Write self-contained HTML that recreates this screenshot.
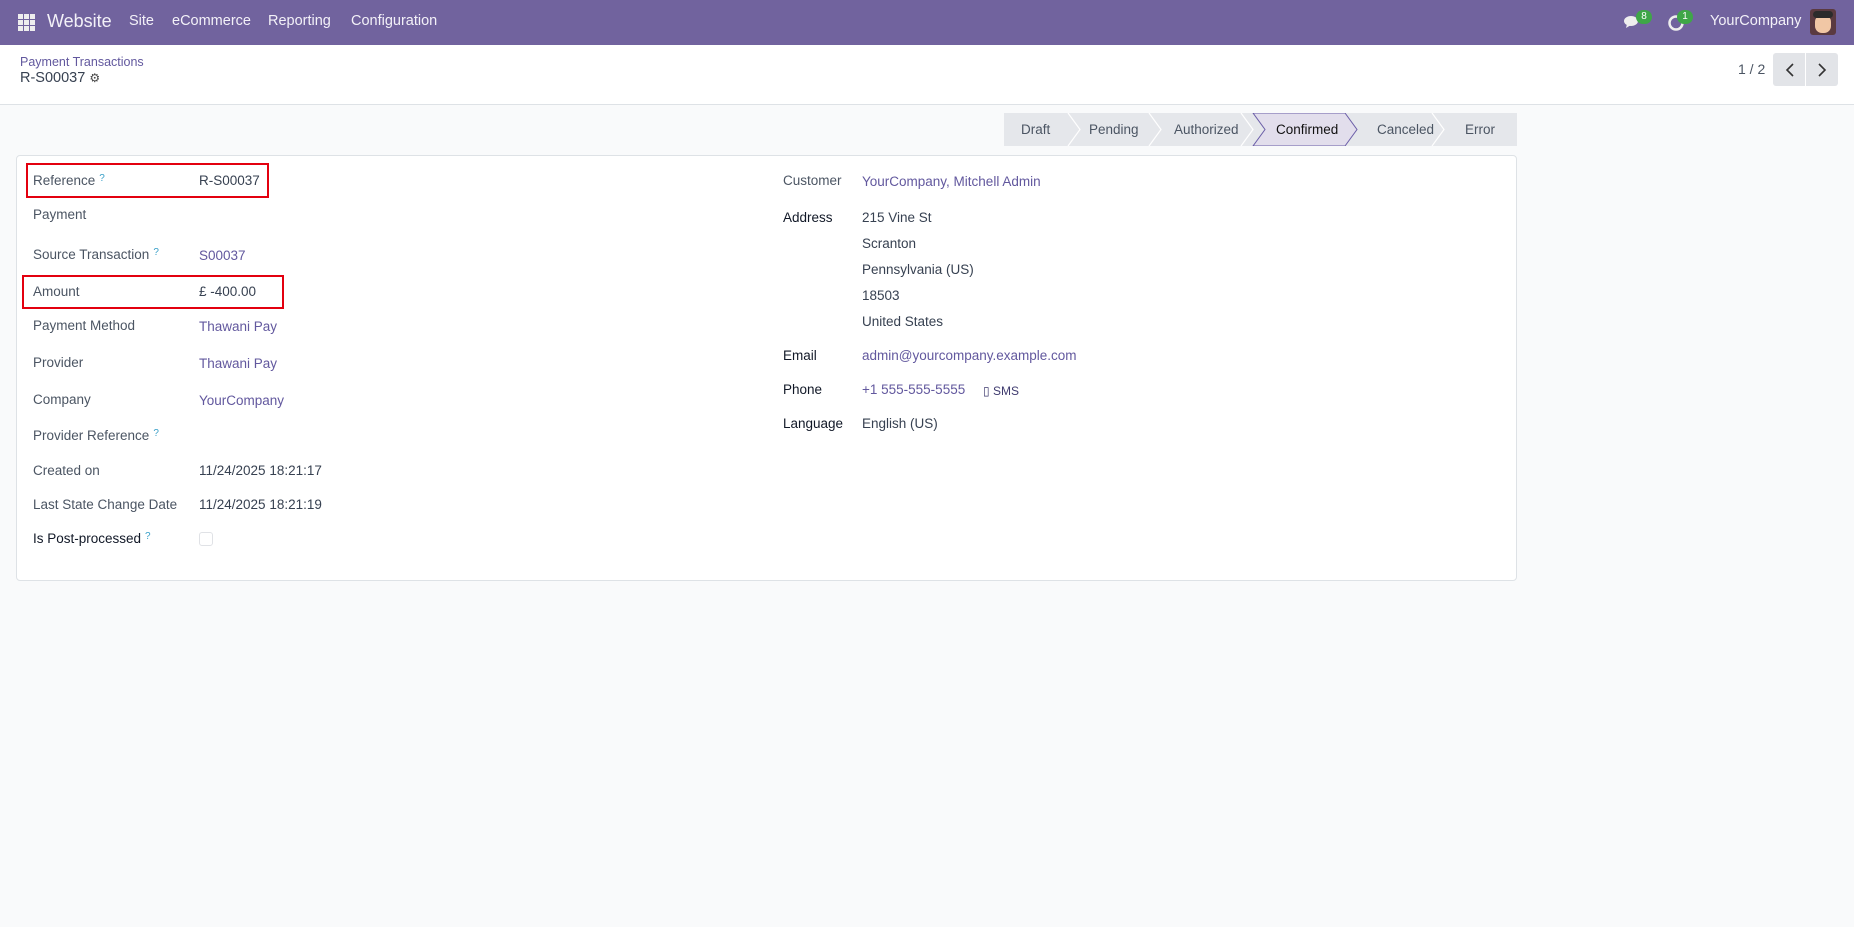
<!DOCTYPE html>
<html><head><meta charset="utf-8"><style>
*{box-sizing:border-box;margin:0;padding:0}
body{width:1854px;height:927px;background:#f9fafb;font-family:"Liberation Sans",sans-serif;font-size:13.5px;color:#374151;position:relative;overflow:hidden}
.nav{position:absolute;left:0;top:0;width:1854px;height:45px;background:#71639e;color:#fff}
.nav span{position:absolute;top:13px;font-size:14.5px;color:#f3f1f8}
.cp{position:absolute;left:0;top:45px;width:1854px;height:60px;background:#fff;border-bottom:1px solid #dee2e6}
.a{position:absolute;white-space:nowrap}
.lbl{color:#4b5563}
.dk{color:#111827}
.lnk{color:#62589e}
.q{color:#3aa0c8;font-size:10px;vertical-align:top;margin-left:4px}
.card{position:absolute;left:16px;top:155px;width:1501px;height:426px;background:#fff;border:1px solid #dee2e6;border-radius:4px}
.red{position:absolute;border:2px solid #e3000f}
</style></head><body>
<div class="nav">
<svg style="position:absolute;left:18px;top:14px" width="17" height="17" viewBox="0 0 17 17" fill="#eee"><rect x="0" y="0" width="5" height="5"/><rect x="6" y="0" width="5" height="5"/><rect x="12" y="0" width="5" height="5"/><rect x="0" y="6" width="5" height="5"/><rect x="6" y="6" width="5" height="5"/><rect x="12" y="6" width="5" height="5"/><rect x="0" y="12" width="5" height="5"/><rect x="6" y="12" width="5" height="5"/><rect x="12" y="12" width="5" height="5"/></svg>
<span style="left:47px;top:11px;font-size:18px">Website</span>
<span style="left:129px">Site</span>
<span style="left:172px">eCommerce</span>
<span style="left:268px">Reporting</span>
<span style="left:351px">Configuration</span>
<svg style="position:absolute;left:1623px;top:14px" width="20" height="16" viewBox="0 0 20 16"><ellipse cx="8" cy="7" rx="7" ry="5" fill="#eee"/><path d="M4 10 L3 14 L8 11Z" fill="#eee"/></svg>
<div style="position:absolute;left:1636px;top:10px;width:16px;height:14px;border-radius:7px;background:#3fa648;color:#fff;font-size:10px;text-align:center;line-height:14px">8</div>
<svg style="position:absolute;left:1667px;top:14px" width="18" height="18" viewBox="0 0 18 18"><circle cx="9" cy="9" r="6.5" fill="none" stroke="#eee" stroke-width="2.5"/></svg>
<div style="position:absolute;left:1677px;top:10px;width:16px;height:14px;border-radius:7px;background:#3fa648;color:#fff;font-size:10px;text-align:center;line-height:14px">1</div>
<span style="left:1710px;top:13px">YourCompany</span>
<div style="position:absolute;left:1810px;top:9px;width:26px;height:26px;border-radius:3px;background:#5a3a40;overflow:hidden"><div style="position:absolute;left:5px;top:6px;width:16px;height:18px;border-radius:7px;background:#f1c7a5"></div><div style="position:absolute;left:3px;top:2px;width:20px;height:7px;border-radius:4px;background:#2b2b2b"></div></div>
</div>
<div class="cp">
<div class="a lnk" style="left:20px;top:10px;font-size:12.5px">Payment Transactions</div>
<div class="a" style="left:20px;top:25px;font-size:14.5px;color:#374151">R-S00037 <span style="color:#444;font-size:12px">⚙</span></div>
<div class="a" style="left:1738px;top:16px;font-size:14px;color:#4b5563">1 / 2</div>
<div class="a" style="left:1773px;top:8px;width:65px;height:33px;background:#e2e4e8;border-radius:3px"></div>
<div class="a" style="left:1805px;top:8px;width:1px;height:33px;background:#fff"></div>
<svg class="a" style="left:1784px;top:17px" width="12" height="16" viewBox="0 0 12 16"><path d="M9 2 L3 8 L9 14" fill="none" stroke="#333" stroke-width="1.6"/></svg>
<svg class="a" style="left:1816px;top:17px" width="12" height="16" viewBox="0 0 12 16"><path d="M3 2 L9 8 L3 14" fill="none" stroke="#333" stroke-width="1.6"/></svg>
</div>
<svg class="a" style="left:1004px;top:113px" width="513" height="33" viewBox="0 0 513 33">
<rect x="0" y="0" width="513" height="33" fill="#e5e7eb"/>
<path d="M249 0 L341 0 L353 16.5 L341 33 L249 33 L261 16.5Z" fill="#e2deec" stroke="#6b5ea8" stroke-width="1"/>
<g fill="none" stroke="#fff" stroke-width="1.2"><path d="M64 0 L76 16.5 L64 33"/><path d="M145 0 L157 16.5 L145 33"/><path d="M237 0 L249 16.5 L237 33"/><path d="M428 0 L440 16.5 L428 33"/></g>
<g font-family="Liberation Sans" font-size="13.5" fill="#4b5563"><text x="17" y="21">Draft</text><text x="85" y="21">Pending</text><text x="170" y="21">Authorized</text><text x="272" y="21" fill="#111">Confirmed</text><text x="373" y="21">Canceled</text><text x="461" y="21">Error</text></g>
</svg>
<div class="card"></div>
<div class="red" style="left:26px;top:163px;width:243px;height:35px"></div>
<div class="red" style="left:22px;top:275px;width:262px;height:34px"></div>
<div class="a lbl" style="left:33px;top:173px">Reference<span class="q">?</span></div><div class="a" style="left:199px;top:173px">R-S00037</div>
<div class="a lbl" style="left:33px;top:207px">Payment</div>
<div class="a lbl" style="left:33px;top:247px">Source Transaction<span class="q">?</span></div><div class="a lnk" style="left:199px;top:248px">S00037</div>
<div class="a lbl" style="left:33px;top:284px">Amount</div><div class="a" style="left:199px;top:284px">£ -400.00</div>
<div class="a lbl" style="left:33px;top:318px">Payment Method</div><div class="a lnk" style="left:199px;top:319px">Thawani Pay</div>
<div class="a lbl" style="left:33px;top:355px">Provider</div><div class="a lnk" style="left:199px;top:356px">Thawani Pay</div>
<div class="a lbl" style="left:33px;top:392px">Company</div><div class="a lnk" style="left:199px;top:393px">YourCompany</div>
<div class="a lbl" style="left:33px;top:428px">Provider Reference<span class="q">?</span></div>
<div class="a lbl" style="left:33px;top:463px">Created on</div><div class="a" style="left:199px;top:463px">11/24/2025 18:21:17</div>
<div class="a lbl" style="left:33px;top:497px">Last State Change Date</div><div class="a" style="left:199px;top:497px">11/24/2025 18:21:19</div>
<div class="a dk" style="left:33px;top:531px">Is Post-processed<span class="q">?</span></div>
<div class="a" style="left:199px;top:532px;width:14px;height:14px;border:1px solid #e0e2e6;border-radius:3px"></div>
<div class="a lbl" style="left:783px;top:173px">Customer</div><div class="a lnk" style="left:862px;top:174px">YourCompany, Mitchell Admin</div>
<div class="a dk" style="left:783px;top:210px">Address</div>
<div class="a" style="left:862px;top:210px">215 Vine St</div>
<div class="a" style="left:862px;top:236px">Scranton</div>
<div class="a" style="left:862px;top:262px">Pennsylvania (US)</div>
<div class="a" style="left:862px;top:288px">18503</div>
<div class="a" style="left:862px;top:314px">United States</div>
<div class="a dk" style="left:783px;top:348px">Email</div><div class="a lnk" style="left:862px;top:348px">admin@yourcompany.example.com</div>
<div class="a dk" style="left:783px;top:382px">Phone</div><div class="a lnk" style="left:862px;top:382px">+1 555-555-5555</div>
<div class="a" style="left:983px;top:384px;font-size:12px;color:#3e3a6e">▯ SMS</div>
<div class="a dk" style="left:783px;top:416px">Language</div><div class="a" style="left:862px;top:416px">English (US)</div>
</body></html>
